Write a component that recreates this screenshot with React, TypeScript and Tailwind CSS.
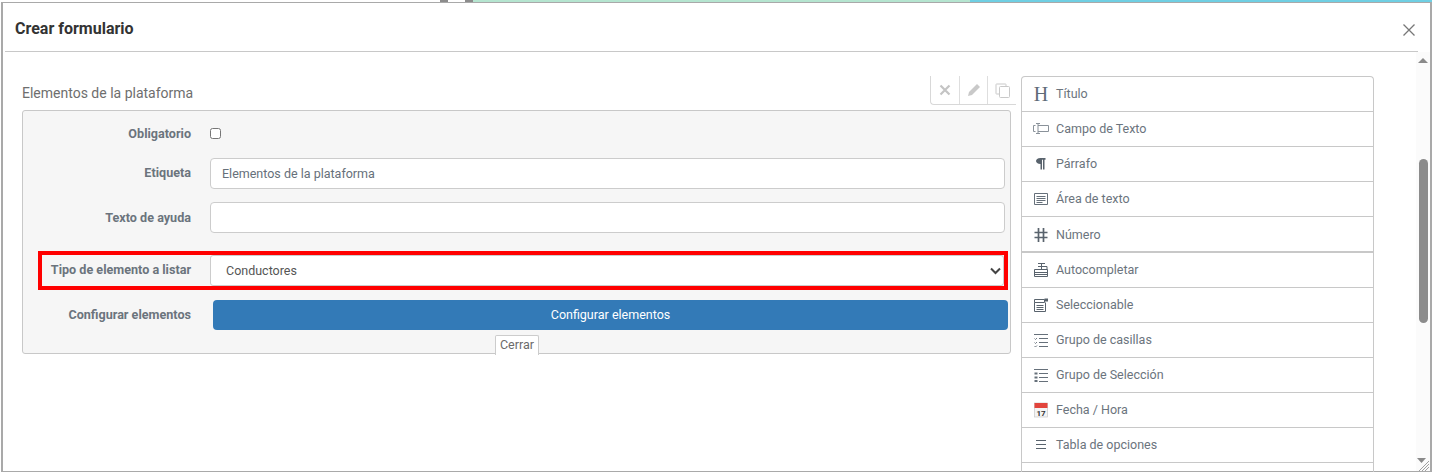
import React from "react";

const I = ({ children }: { children: React.ReactNode }) => (
  <svg width="16" height="16" viewBox="0 0 16 16" fill="none" stroke="#66707a" strokeWidth="1" className="shrink-0">
    {children}
  </svg>
);

const items: { label: string; icon: React.ReactNode; extra?: string; gap?: string }[] = [
  {
    label: "Título",
    icon: <span className="w-4 text-center text-[20px] leading-4 text-[#5f6b78] [font-family:'Liberation_Serif',serif]">H</span>,
  },
  {
    label: "Campo de Texto",
    icon: (
      <I>
        <path d="M5 4.500h10.500v6H5M3 2.500h4M3 12.500h4M5 2.500v10M.5 4.500h2M.5 4.500v6h2" stroke="#8a929a" />
      </I>
    ),
  },
  {
    label: "Párrafo",
    icon: (
      <I>
        <path d="M7.500 13.500V8C4.500 8 3 6.500 3 5s1.500-3 4.500-3h5v1.700h-1v9.800H10V3.700H9v9.800z" fill="#59636d" stroke="none" />
      </I>
    ),
  },
  {
    label: "Área de texto",
    icon: (
      <I>
        <path d="M1.500 2.500h13v11h-13zM3.500 5.500h9M3.500 7.500h9M3.500 9.500h9M3.500 11.500h6" />
      </I>
    ),
  },
  {
    label: "Número",
    extra: "h-[36px] pt-[2px] border-b-[2px]",
    icon: (
      <I>
        <path d="M5.500 1v14M10.500 1v14M1.500 5.500h13M1.500 10.500h13" strokeWidth="1.700" stroke="#59636d" />
      </I>
    ),
  },
  {
    label: "Autocompletar",
    icon: (
      <I>
        <path d="M1.500 7.500h13v7h-13zM1.500 10.500h13M1.500 12.500h13M5 1.500h7M8.500 1.500v6M5 4.500h9v3" stroke="#59636d" />
      </I>
    ),
  },
  {
    label: "Seleccionable",
    icon: (
      <I>
        <path d="M1.500 2.500h10v3h-10zM1.500 5.500v9h11v-9M3.500 8.500h7M3.500 10.500h7M3.500 12.500h7" stroke="#59636d" />
        <path d="M11.500 1.500h3.500v3h-3.500z" fill="#59636d" stroke="none" />
      </I>
    ),
  },
  {
    label: "Grupo de casillas",
    icon: (
      <I>
        <path d="M1 2.500h14M6 6.500h9M6 10.500h9M6 14.500h9" />
        <path d="M1.500 6.500l1 1 1.500-1.500M1.500 10.500l1 1 1.500-1.500M1.500 14l1 1 1.500-1.500" strokeWidth="0.900" />
      </I>
    ),
  },
  {
    label: "Grupo de Selección",
    icon: (
      <I>
        <path d="M1 2.500h14M6 6.500h9M6 10.500h9M6 14.500h9" />
        <path d="M1.500 5.500h3v2h-3zM1.500 9.500h3v2h-3zM1.500 13h3v2h-3z" fill="#66707a" stroke="none" />
      </I>
    ),
  },
  {
    label: "Fecha / Hora",
    icon: (
      <svg width="16" height="16" viewBox="0 0 16 16" className="shrink-0">
        <rect x="1.500" y="1" width="13" height="14" fill="#f4f4f4" stroke="#c9c9c9" strokeWidth="0.700" />
        <rect x="1.500" y="1" width="13" height="5" fill="#e2443c" />
        <text x="8" y="13.500" textAnchor="middle" fontSize="8" fontWeight="700" fill="#333" fontFamily="Roboto, sans-serif">17</text>
      </svg>
    ),
  },
  {
    label: "Tabla de opciones",
    icon: (
      <I>
        <path d="M3 3.500h10M3 7.500h10M3 11.500h10" stroke="#59636d" />
      </I>
    ),
  },
];

const Label = ({ children, className = "" }: { children: React.ReactNode; className?: string }) => (
  <label className={`w-[168px] shrink-0 text-right text-[12.600px] font-bold text-[#6b747d] ${className}`}>{children}</label>
);

export default function App() {
  return (
    <div className="flex h-[472px] w-[1432px] flex-col overflow-hidden bg-white [font-family:Roboto,sans-serif]">
      <div className="flex h-[2px] shrink-0">
        <div className="w-[440px] bg-white" />
        <div className="w-[8px] bg-[#8c8c8c]" />
        <div className="w-[17px] bg-white" />
        <div className="w-[8px] bg-[#8c8c8c]" />
        <div className="w-[497px] bg-[#b5e5d0]" />
        <div className="flex-1 bg-[#6fcfe3]" />
      </div>
      <div className="relative ml-[1px] flex min-h-0 flex-1 flex-col border-t-[1px] border-r-[2px] border-b-[1px] border-l-[2px] border-[#a9a9a9] bg-white">
        <div className="mr-[12px] ml-[2px] flex h-[49px] shrink-0 items-center justify-between border-b border-[#c8c8c8] pt-[4px] pl-[10px]">
          <h1 className="text-[16px] font-bold text-[#333333]">Crear formulario</h1>
        </div>
        <button className="absolute top-[20px] right-[14px] text-[#777777]">
          <svg width="14" height="14" viewBox="0 0 14 14" stroke="#777777" strokeWidth="1.300" fill="none" className="block">
            <path d="M1.500 1.500l11 11M12.500 1.500l-11 11" />
          </svg>
        </button>

        <div className="flex min-h-0 flex-1">
          <div className="flex min-w-0 flex-1 pt-[24px] pl-[19px]">
            <div className="w-[989px] shrink-0">
              <div className="flex h-[34px] items-start justify-between">
                <span className="pt-[8px] text-[14px] leading-[18px] text-[#6e6e6e]">Elementos de la plataforma</span>
                <div className="-mr-[5px] flex h-[29px] w-[86px] rounded-bl-[4px] border-b border-l border-[#d8d8d8]">
                  <div className="flex w-[29px] items-center justify-center border-r border-[#dedede]">
                    <svg width="12" height="12" viewBox="0 0 12 12" stroke="#c4c4c4" strokeWidth="2.200" fill="none">
                      <path d="M1.500 1.500l9 9M10.500 1.500l-9 9" />
                    </svg>
                  </div>
                  <div className="flex w-[28px] items-center justify-center border-r border-[#dedede]">
                    <svg width="14" height="14" viewBox="0 0 14 14" fill="#c9c9c9">
                      <path d="M10 1l3 3-8 8-4 1 1-4z" />
                    </svg>
                  </div>
                  <div className="flex flex-1 items-center justify-center">
                    <svg width="15" height="15" viewBox="0 0 15 15" stroke="#c9c9c9" fill="none">
                      <path d="M10.500 2.500v-1.500a0.500 0.500 0 0 0-0.500-0.500H1a0.500 0.500 0 0 0-0.500 0.500v9a0.500 0.500 0 0 0 0.500 0.500h2.500" transform="translate(0.500 0.500)" />
                      <rect x="4.500" y="3.500" width="10" height="11" rx="1" />
                    </svg>
                  </div>
                </div>
              </div>
              <div className="relative h-[244px] rounded-[3px] border border-[#c8c8c8] bg-[#f6f6f6] pt-[17px]">
                <div className="flex h-[12px] items-center">
                  <Label>Obligatorio</Label>
                  <input type="checkbox" className="mb-[2px] ml-[19px] h-[11px] w-[11px]" />
                </div>
                <div className="mt-[18px] flex h-[31px] items-center">
                  <Label>Etiqueta</Label>
                  <input
                    readOnly
                    value="Elementos de la plataforma"
                    className="ml-[19px] h-[31px] w-[795px] rounded-[4px] border border-[#cccccc] bg-white px-[11px] text-[12.500px] text-[#66707a]"
                  />
                </div>
                <div className="mt-[13px] flex h-[31px] items-center">
                  <Label className="pt-[2px]">Texto de ayuda</Label>
                  <input readOnly className="ml-[19px] h-[31px] w-[795px] rounded-[4px] border border-[#cccccc] bg-white px-[11px]" />
                </div>
                <div className="mt-[18px] ml-[15px] flex h-[39px] w-[970px] items-center border-[4px] border-[#ff0000]">
                  <label className="w-[149px] shrink-0 text-right text-[12.600px] font-bold text-[#6b747d]">Tipo de elemento a listar</label>
                  <div className="ml-[19px] flex h-[31px] flex-1 items-center justify-between rounded-[3px] border border-[#cccccc] bg-white pr-[2px] pl-[15px]">
                    <span className="pt-[2px] text-[12.500px] text-[#555555]">Conductores</span>
                    <svg width="11" height="8" viewBox="0 0 11 8" stroke="#444444" strokeWidth="2" fill="none">
                      <path d="M1 1.500l4.500 4.500 4.500-4.500" />
                    </svg>
                  </div>
                </div>
                <div className="mt-[10px] flex h-[30px] items-center">
                  <Label>Configurar elementos</Label>
                  <button className="ml-[22px] h-[30px] w-[795px] rounded-[4px] bg-[#337ab7] text-[12.500px] text-white">Configurar elementos</button>
                </div>
                <div className="absolute top-[224px] left-[472px] flex h-[20px] w-[44px] items-center justify-center rounded-t-[2px] border border-b-0 border-[#cccccc] bg-white text-[12.500px] text-[#6a6a6a]">
                  Cerrar
                </div>
              </div>
            </div>
            <div className="ml-[10px] h-[500px] w-[353px] shrink-0 rounded-t-[4px] border-x border-t border-[#c8c8c8]">
              {items.map((it) => (
                <div
                  key={it.label}
                  className={`flex items-center border-b border-[#c8c8c8] pl-[11px] text-[12.500px] text-[#6b747d] ${it.extra ?? "h-[35px]"} gap-[7px]`}
                >
                  {it.icon}
                  <span>{it.label}</span>
                </div>
              ))}
            </div>
          </div>
          <div className="relative w-[14px] shrink-0 bg-[#fbfbfb]">
            <div className="mx-auto mt-[6px] h-0 w-0 border-x-[5px] border-b-[5px] border-x-transparent border-b-[#8a8a8a]" />
            <div className="mx-auto mt-[96px] h-[164px] w-[9px] rounded-full bg-[#8c8c8c]" />
            <div className="absolute right-[0px] bottom-[0px] h-[14px] w-[14px]">
              <svg width="14" height="14" viewBox="0 0 14 14" fill="none">
                <path d="M1 1h9L5.500 6z" fill="#8a8a8a" />
                <path d="M3 14l10-10M6 14l7-7M9 14l4-4" stroke="#a0a0a0" />
              </svg>
            </div>
          </div>
        </div>
      </div>
    </div>
  );
}
